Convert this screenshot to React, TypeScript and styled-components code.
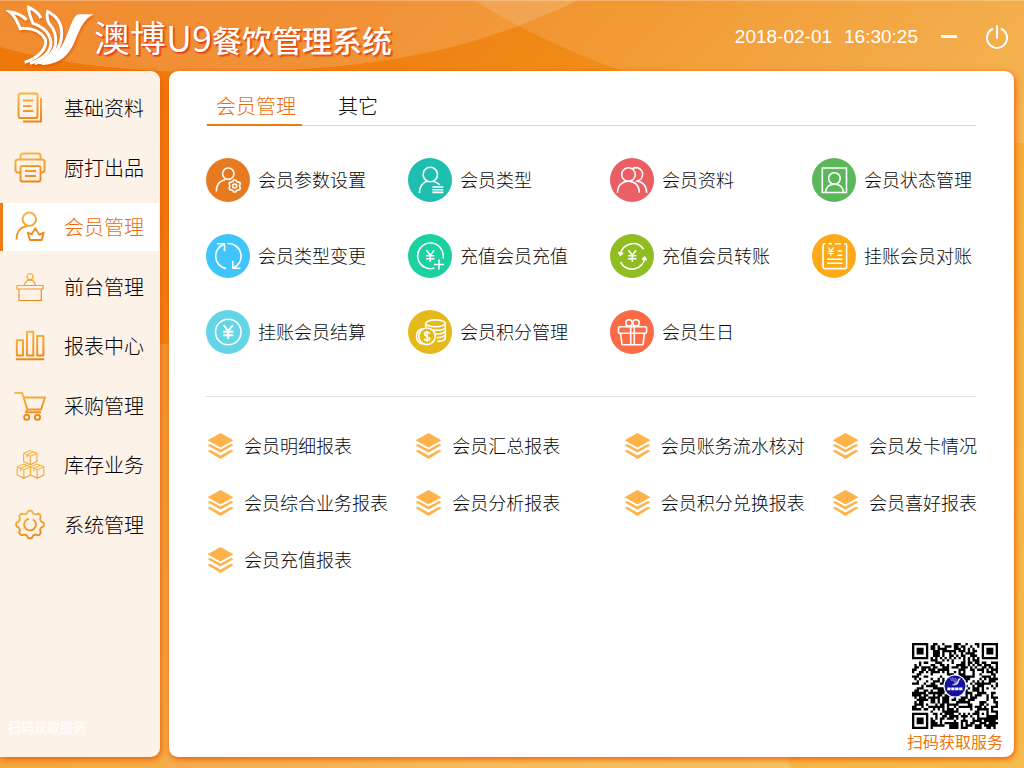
import React from "react";
import styled, { createGlobalStyle } from "styled-components";

const GlobalStyle = createGlobalStyle`
  *, *::before, *::after { box-sizing: border-box; }
  body {
    margin: 0;
    font-family: "Noto Sans CJK SC", "Liberation Sans", sans-serif;
    font-weight: 300;
    color: #080808;
  }
  button { font: inherit; color: inherit; border: 0; padding: 0; background: none; cursor: pointer; }
  ul { list-style: none; margin: 0; padding: 0; }
  a { color: inherit; text-decoration: none; }
`;

const Page = styled.div`
  position: relative;
  isolation: isolate;
  display: flex;
  flex-direction: column;
  min-height: 100vh;
  background: linear-gradient(135deg, #ee7709 0%, #ef7c10 20%, #f08c18 36%, #f3a233 57%, #f5b03e 68%, #f6bd4c 100%);
`;

const Backdrop = styled.svg`
  position: absolute;
  inset: 0;
  z-index: -1;
  width: 100%;
  height: 100%;
`;

const Header = styled.header`
  display: flex;
  align-items: center;
  justify-content: space-between;
  height: 71px;
  padding: 0 14px 0 6px;
  border-top: 1px solid rgba(255, 255, 255, 0.25);
  color: #fff;
`;

const Brand = styled.div`
  display: flex;
  align-items: center;
`;

const Logo = styled.svg`
  width: 88px;
  height: 62px;
  filter: drop-shadow(1px 2px 1px rgba(220, 80, 0, 0.6));
`;

const Title = styled.h1`
  display: flex;
  align-items: baseline;
  margin: 0;
  padding-top: 3px;
  font-size: 36px;
  line-height: 48px;
  font-weight: 400;
  text-shadow: 0 0 1px #e8381c, 1px 1px 1px #e8381c, 2px 2px 1px rgba(226, 60, 20, 0.6);
`;

const Subtitle = styled.span`
  font-size: 30px;
  font-weight: 500;
  text-shadow: 1px 1px 1px #e2490c, 2px 2px 1px rgba(226, 73, 12, 0.7);
`;

const Status = styled.div`
  display: flex;
  align-items: center;
  padding-top: 2px;
  font-family: "Liberation Sans", sans-serif;
  font-size: 19px;
  font-weight: 400;
  line-height: 24px;
`;

const Clock = styled.time`
  display: flex;
  gap: 12px;
  margin-right: 22px;
`;

const WindowButton = styled.button`
  display: flex;
  align-items: center;
  justify-content: center;
  width: 26px;
  height: 26px;
  & + & { margin-left: 18px; }
`;

const Body = styled.div`
  flex: 1;
  display: flex;
  gap: 9px;
  padding: 0 10px 11px 0;
`;

const Sidebar = styled.nav`
  display: flex;
  flex-direction: column;
  justify-content: space-between;
  flex: 0 0 160px;
  padding: 13px 0 20px;
  border-radius: 0 9px 9px 0;
  background: #fdf2e8;
  box-shadow: 1px 2px 6px #f05a00;
`;

const MenuList = styled.ul`
  display: flex;
  flex-direction: column;
  justify-content: space-between;
  min-height: 465px;
`;

const MenuButton = styled.button<{ $active?: boolean }>`
  display: flex;
  align-items: center;
  gap: 18px;
  width: 159px;
  height: 48px;
  padding-left: 14px;
  font-size: 20px;
  line-height: 28px;
  text-align: left;
  color: ${(p) => (p.$active ? "#ee6a08" : "#000")};
  background: ${(p) => (p.$active ? "#fff" : "transparent")};
  box-shadow: ${(p) => (p.$active ? "inset 3px 0 0 #ef7d16" : "none")};
`;

const MenuIcon = styled.svg`
  flex: none;
  width: 32px;
  height: 32px;
`;

const SideNote = styled.p`
  margin: 0;
  padding-left: 8px;
  font-size: 13px;
  line-height: 20px;
  font-weight: 400;
  color: #fff;
`;

const Main = styled.main`
  flex: 1;
  display: flex;
  flex-direction: column;
  min-width: 0;
  padding: 11px 11px 4px 37px;
  border-radius: 9px;
  background: #fff;
  box-shadow: 1px 2px 6px #f05a00;
`;

const Section = styled.section`
  margin-right: 27px;
`;

const Tabs = styled.div`
  display: flex;
  gap: 27px;
  height: 44px;
  padding-left: 1px;
  border-bottom: 1px solid #d9d9d9;
`;

const Tab = styled.button<{ $active?: boolean }>`
  height: 44px;
  padding: 5px 6px 0 9px;
  font-size: 20px;
  line-height: 28px;
  color: ${(p) => (p.$active ? "#ee6a08" : "#080808")};
  border-bottom: 2px solid ${(p) => (p.$active ? "#e97a14" : "transparent")};
`;

const TileGrid = styled.div`
  display: grid;
  grid-template-columns: repeat(4, 164px);
  justify-content: space-between;
  row-gap: 32px;
  padding: 32px 0 42px;
  border-bottom: 1px solid #dedede;
`;

const Tile = styled.button`
  display: flex;
  align-items: center;
  gap: 8px;
  font-size: 18px;
  line-height: 26px;
  white-space: nowrap;
`;

const Label = styled.span`
  padding-bottom: 2px;
`;

const TileIcon = styled.svg<{ $color: string }>`
  flex: none;
  width: 44px;
  height: 44px;
  border-radius: 50%;
  background: ${(p) => p.$color};
`;

const ReportGrid = styled.div`
  display: grid;
  grid-template-columns: repeat(4, 145px);
  justify-content: space-between;
  row-gap: 29px;
  padding-top: 35px;
`;

const Report = styled.a`
  display: flex;
  align-items: center;
  gap: 9px;
  height: 28px;
  font-size: 18px;
  line-height: 26px;
  white-space: nowrap;
`;

const ReportIcon = styled.svg`
  flex: none;
  width: 29px;
  height: 28px;
`;

const QrCard = styled.figure`
  display: flex;
  flex-direction: column;
  align-items: center;
  align-self: flex-end;
  margin: auto 0 0;
`;

const QrImage = styled.svg`
  width: 86px;
  height: 86px;
`;

const QrCaption = styled.figcaption`
  font-size: 16px;
  line-height: 24px;
  font-weight: 400;
  color: #ee7510;
`;

/* Soft-toothed cog: a rounded wave around the circle, flattened at crests and valleys. */
function cogPath(cx: number, cy: number, teeth: number, radius: number, depth: number) {
  const pts: string[] = [];
  const count = teeth * 16;
  for (let i = 0; i < count; i++) {
    const a = (i / count) * Math.PI * 2;
    const wave = Math.tanh(1.8 * Math.cos(a * teeth));
    const r = radius + depth * wave;
    pts.push(`${(cx + r * Math.sin(a)).toFixed(2)} ${(cy - r * Math.cos(a)).toFixed(2)}`);
  }
  return `M${pts.join("L")}Z`;
}

const cube = (x: number, y: number, k: number) => (
  <g transform={`translate(${x} ${y}) scale(${k})`}>
    <path d="M0 3.5 7 0.5 14 3.5V12L7 15.5 0 12ZM0 3.5 7 6.5 14 3.5M7 6.5V15.5M3.5 5V8.2M3.5 5 10.2 2" />
  </g>
);

const menu: { label: string; thin?: boolean; icon: React.ReactNode }[] = [
  {
    label: "基础资料",
    icon: (
      <>
        <rect x="4.5" y="1.5" width="19" height="24.5" rx="2" />
        <path d="M27 6V29.5H9M9 8.5H19.5M9 14H17.5M9 19H19.5" />
      </>
    ),
  },
  {
    label: "厨打出品",
    icon: (
      <>
        <path d="M6.5 7.5V4Q6.5 1.5 9 1.5H24Q26.5 1.5 26.5 4V7.5" />
        <path d="M6.5 20.5H4Q1.5 20.5 1.5 18V10Q1.5 7.5 4 7.5H28Q30.5 7.5 30.5 10V18Q30.5 20.5 28 20.5H26.5" />
        <rect x="6.5" y="14" width="20" height="15.5" rx="2" />
        <path d="M11 19H22M11 24H22" />
      </>
    ),
  },
  {
    label: "会员管理",
    icon: (
      <>
        <circle cx="15.3" cy="8.2" r="6.7" />
        <path d="M2.5 28.5C2.5 20.5 7 15.5 13.5 15.3" />
        <path d="M13.7 21.5 16 29H27.7L29.7 21.5 25.3 23.8 21.3 17.3 17.7 23.3Z" />
      </>
    ),
  },
  {
    label: "前台管理",
    thin: true,
    icon: (
      <>
        <circle cx="16" cy="5.7" r="3" />
        <path d="M10.5 14.5C11 10.5 13 9.2 16 9.2S21 10.5 21.5 14.5" />
        <path d="M3 14.5H29V18H3ZM5 18V29.5H27.3V18" />
      </>
    ),
  },
  {
    label: "报表中心",
    icon: <path d="M2.8 10.2H9V25.5H2.8ZM13 1.8H19.3V25.5H13ZM23.2 6H29.4V25.5H23.2ZM1.8 29.3H30.2" />,
  },
  {
    label: "采购管理",
    icon: (
      <>
        <path d="M0.5 3H8.3L13.3 19.5H27L31 7.5H9.6M13.3 19.5 11.8 22.2H27" />
        <circle cx="12.7" cy="27.3" r="2.6" />
        <circle cx="23.5" cy="27.3" r="2.6" />
      </>
    ),
  },
  {
    label: "库存业务",
    thin: true,
    icon: (
      <>
        {cube(9.6, 1, 0.95)}
        {cube(3.2, 14.5, 0.95)}
        {cube(16.5, 14.5, 0.95)}
      </>
    ),
  },
  {
    label: "系统管理",
    icon: (
      <>
        <path d={cogPath(16, 15.5, 8, 12.6, 1.3)} />
        <path d="M18.8 10.3A5.9 5.9 0 1 1 15 9.7" />
      </>
    ),
  },
];

const yen = (x: number, y: number, s = 1) => (
  <g transform={`translate(${x} ${y}) scale(${s})`}>
    <path d="M-4-6 0-0.8 4-6M0-0.8V6M-4.4-0.2H4.4M-4.4 2.8H4.4" />
  </g>
);

const tiles: { label: string; color: string; icon: React.ReactNode }[] = [
  {
    label: "会员参数设置",
    color: "#e67a20",
    icon: (
      <>
        <circle cx="22.3" cy="15.7" r="5.7" />
        <path d="M10.3 33.5C10.3 26.5 13.5 22.8 19 21.8" />
        <path d={cogPath(28.7, 28, 6, 5.5, 0.6)} />
        <circle cx="28.7" cy="28" r="2" />
      </>
    ),
  },
  {
    label: "会员类型",
    color: "#1fbfb0",
    icon: (
      <>
        <circle cx="22.3" cy="16.5" r="7.2" />
        <path d="M11.4 35C11.4 28 15.5 24 19.5 23.2M25 23.2C28 23.8 30 25 31.8 26.8M24.3 29H35.3M24.3 31.7H35.3M24.3 34.4H35.3" />
      </>
    ),
  },
  {
    label: "会员资料",
    color: "#ea5f64",
    icon: (
      <>
        <circle cx="18.5" cy="16.5" r="6.8" />
        <path d="M7.5 34.7C7.5 27 12.5 23.3 18.5 23.3S29.3 27 29.3 34.7" />
        <path d="M22.5 10.4C28 8 33 12 32.6 17C32.4 20 30 22.7 26.5 23C32.5 23.3 36.7 28 36.7 34.7" />
      </>
    ),
  },
  {
    label: "会员状态管理",
    color: "#5ab85a",
    icon: (
      <>
        <rect x="10.3" y="10" width="24.2" height="24.5" />
        <circle cx="22.4" cy="20.5" r="5.8" />
        <path d="M13.5 34.5C14 29.5 17 26.3 22.4 26.3S31 29.5 31.5 34.5" />
      </>
    ),
  },
  {
    label: "会员类型变更",
    color: "#3fc5fb",
    icon: (
      <>
        <path d="M20 34.6A12.7 12.7 0 0 1 18 10.2M21.5 9.5A12.7 12.7 0 0 1 27 34" />
        <path d="M11 9.7H18.5V17.2M34.3 34.3H26.8V26.8" />
      </>
    ),
  },
  {
    label: "充值会员充值",
    color: "#1bd1a1",
    icon: (
      <>
        <path d="M26.5 34A12.8 12.8 0 1 1 35 24.5" />
        {yen(22.3, 22, 0.95)}
        <path d="M31 25.5V35.5M26 30.5H36" />
      </>
    ),
  },
  {
    label: "充值会员转账",
    color: "#8fbd22",
    icon: (
      <>
        <path d="M10.5 20A12.8 12.8 0 0 1 33.5 15M34.7 24A12.8 12.8 0 0 1 10.5 28" />
        <path d="M8.8 18.5 10.5 21.2 12.6 19.3ZM32.5 25 34.8 23 36.2 25.7Z" fill="#fff" />
        {yen(22.3, 22, 0.95)}
      </>
    ),
  },
  {
    label: "挂账会员对账",
    color: "#fdaa18",
    icon: (
      <>
        <path d="M13.5 9.8H12.5Q11 9.8 11 11.3V33Q11 34.6 12.5 34.6H33Q34.6 34.6 34.6 33V11.3Q34.6 9.8 33 9.8H32M16.5 9.8H20M22.5 9.8H29" />
        {yen(18.9, 17.5, 0.7)}
        <path d="M25.5 17H30.3M25.5 21.2H30.3M15 25.2H30.5M15 29.2H30.5" />
      </>
    ),
  },
  {
    label: "挂账会员结算",
    color: "#63d5e6",
    icon: (
      <>
        <circle cx="22.3" cy="22" r="12.8" />
        {yen(22.3, 22, 1.15)}
      </>
    ),
  },
  {
    label: "会员积分管理",
    color: "#e5b91a",
    icon: (
      <>
        <ellipse cx="27.5" cy="13.3" rx="9.8" ry="3.4" />
        <path d="M17.7 13.3V17.5M37.3 13.3V28C37.3 30 33.5 31.2 29.5 31.4M37.3 17.3C36 19.5 31 20.7 25.5 20M37.3 21C36 23 33 24 28 24M37.3 24.7C36 26.7 33 27.6 29 27.6" />
        <path d="M14.5 18.4C6.5 20.5 6.5 32 14.5 34.2" />
        <circle cx="19" cy="26.3" r="8.3" />
        <path d="M21.7 23.7C21 21.7 16.5 21.8 16.5 24.2S21.8 26.2 21.8 28.7 17 31 16.2 28.8M19.1 21V31.7" />
      </>
    ),
  },
  {
    label: "会员生日",
    color: "#fc6b45",
    icon: (
      <>
        <rect x="8.5" y="16.8" width="28" height="6.4" rx="1" />
        <path d="M10.5 23.2 12 34.7H33L34.5 23.2M20.7 16.8V34.7M24.3 16.8V34.7" />
        <circle cx="19" cy="12.9" r="3.2" />
        <circle cx="26" cy="12.9" r="3.2" />
      </>
    ),
  },
];

const reports = [
  "会员明细报表",
  "会员汇总报表",
  "会员账务流水核对",
  "会员发卡情况",
  "会员综合业务报表",
  "会员分析报表",
  "会员积分兑换报表",
  "会员喜好报表",
  "会员充值报表",
];

const QR_SIZE = 37;

/* Dark modules of the code as one path: finders, timing lines, alignment mark, then data. */
function qrPath() {
  let seed = 20180201;
  const next = () => {
    seed = (seed * 48271) % 2147483647;
    return seed / 2147483647;
  };
  const ring = (dx: number, dy: number) => {
    const d = Math.max(Math.abs(dx), Math.abs(dy));
    return d === 3 || d <= 1;
  };
  let d = "";
  for (let y = 0; y < QR_SIZE; y++) {
    for (let x = 0; x < QR_SIZE; x++) {
      const data = next() > 0.46;
      const last = QR_SIZE - 1;
      let dark = data;
      if (x < 8 && y < 8) dark = x < 7 && y < 7 && ring(x - 3, y - 3);
      else if (x > last - 8 && y < 8) dark = x > last - 7 && y < 7 && ring(x - (last - 3), y - 3);
      else if (x < 8 && y > last - 8) dark = x < 7 && y > last - 7 && ring(x - 3, y - (last - 3));
      else if (x === 6 || y === 6) dark = (x + y) % 2 === 0;
      else if (Math.abs(x - 30) <= 2 && Math.abs(y - 30) <= 2)
        dark = Math.max(Math.abs(x - 30), Math.abs(y - 30)) !== 1;
      if (dark) d += `M${x} ${y}h1v1h-1z`;
    }
  }
  return d;
}

/* Feathers are open strokes that meet in one tail; the right wing is a solid sweep. */
const BirdShape = () => (
  <>
    <g fill="none" stroke="#fff" strokeWidth="9" strokeLinejoin="miter" strokeMiterlimit="4">
      <path d="M74 60C62 47 46 39 24 36C42 50 46 68 55 86C88 82 116 94 130 118C136 146 112 172 68 187" />
      <path d="M117 54C110 40 98 30 80 22C80 42 87 56 93 70C122 80 143 100 147 126C148 154 124 178 84 190" />
      <path d="M120 190C150 178 178 142 179 104C180 72 164 48 137 35C133 50 136 60 141 70C157 88 165 110 160 136C154 160 130 182 98 191" />
    </g>
    <path fill="#fff" d="M274 43H228C214 48 206 80 190 116C178 146 152 176 108 190L124 195C174 192 200 166 216 130C232 92 244 58 274 43Z" />
  </>
);

export default function App() {
  return (
    <Page>
      <GlobalStyle />
      <Backdrop viewBox="0 0 1024 768" preserveAspectRatio="none" aria-hidden="true">
        <path d="M0 0H578C480 48 380 72 210 72C130 72 60 64 0 47Z" fill="#fff" fillOpacity="0.16" />
        <path d="M474 0C560 56 740 132 1024 143V0Z" fill="#fff" fillOpacity="0.12" />
        <path d="M0 344H165C450 360 700 520 791 768H0Z" fill="#fff" fillOpacity="0.16" />
        <path d="M0 344H165V768H0Z" fill="#f5b03c" fillOpacity="0.4" />
      </Backdrop>

      <Header>
        <Brand>
          <Logo viewBox="12 15 264 186" aria-hidden="true">
            <BirdShape />
          </Logo>
          <Title>
            澳博U9<Subtitle>餐饮管理系统</Subtitle>
          </Title>
        </Brand>
        <Status>
          <Clock dateTime="2018-02-01T16:30:25">
            <span>2018-02-01</span>
            <span>16:30:25</span>
          </Clock>
          <WindowButton aria-label="最小化">
            <svg width="26" height="26" viewBox="0 0 26 26" stroke="#fff" strokeWidth="3">
              <path d="M1 12.5H17" />
            </svg>
          </WindowButton>
          <WindowButton aria-label="退出">
            <svg width="26" height="26" viewBox="0 0 26 26" fill="none" stroke="#fff" strokeWidth="2" strokeLinecap="round">
              <path d="M13 2V14M8.5 5A10 10 0 1 0 17.5 5" />
            </svg>
          </WindowButton>
        </Status>
      </Header>

      <Body>
        <Sidebar>
          <MenuList>
            {menu.map((item, i) => (
              <li key={item.label}>
                <MenuButton $active={i === 2} aria-current={i === 2 ? "page" : undefined}>
                  <MenuIcon
                    viewBox="0 0 32 32"
                    fill="none"
                    stroke="url(#menu-amber)"
                    strokeWidth={item.thin ? 1.2 : 1.9}
                    strokeLinejoin="round"
                    aria-hidden="true"
                  >
                    <defs>
                      <linearGradient id="menu-amber" gradientUnits="userSpaceOnUse" x1="8" y1="0" x2="16" y2="32">
                        <stop offset="0" stopColor="#f6bb45" />
                        <stop offset="1" stopColor="#ee8114" />
                      </linearGradient>
                    </defs>
                    {item.icon}
                  </MenuIcon>
                  {item.label}
                </MenuButton>
              </li>
            ))}
          </MenuList>
          <SideNote>扫码获取服务</SideNote>
        </Sidebar>

        <Main>
          <Section>
            <Tabs role="tablist">
              <Tab role="tab" aria-selected="true" $active>
                会员管理
              </Tab>
              <Tab role="tab" aria-selected="false">
                其它
              </Tab>
            </Tabs>
            <TileGrid>
              {tiles.map((tile) => (
                <Tile key={tile.label}>
                  <TileIcon
                    $color={tile.color}
                    viewBox="0 0 44 44"
                    fill="none"
                    stroke="#fff"
                    strokeWidth="1.6"
                    strokeLinejoin="round"
                    aria-hidden="true"
                  >
                    {tile.icon}
                  </TileIcon>
                  <Label>{tile.label}</Label>
                </Tile>
              ))}
            </TileGrid>
            <ReportGrid>
              {reports.map((name) => (
                <Report key={name} href="#">
                  <ReportIcon viewBox="0 0 29 28" fill="#fdb24a" aria-hidden="true">
                    <path d="M14.5 1 27.5 8.2 14.5 15.4 1.5 8.2Z" />
                    <path d="M1.5 13.2 4 12 14.5 17.6 25 12 27.5 13.2 14.5 20.6Z" />
                    <path d="M1.5 18.9 4 17.7 14.5 23.6 25 17.7 27.5 18.9 14.5 27Z" />
                  </ReportIcon>
                  <Label>{name}</Label>
                </Report>
              ))}
            </ReportGrid>
          </Section>

          <QrCard>
            <QrImage viewBox="0 0 37 37" role="img" aria-label="二维码">
              <path d={qrPath()} fill="#000" />
              <circle cx="18.5" cy="18.5" r="5" fill="#fff" />
              <circle cx="18.5" cy="18.5" r="4.5" fill="#1510a0" />
              <g transform="translate(15.9 14.5) scale(0.019)">
                <BirdShape />
              </g>
              <path d="M15.2 19.7H21.8" stroke="#fff" strokeWidth="1.2" strokeDasharray="1.4 0.3" />
            </QrImage>
            <QrCaption>扫码获取服务</QrCaption>
          </QrCard>
        </Main>
      </Body>
    </Page>
  );
}
